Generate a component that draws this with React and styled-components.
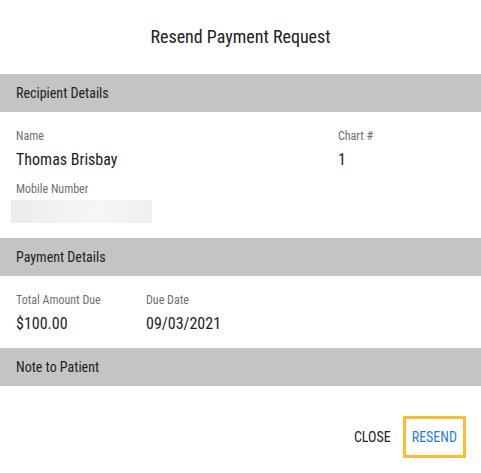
import React from 'react'
import styled, { createGlobalStyle } from 'styled-components';

const GlobalStyle = createGlobalStyle`
    html, body {
        margin: 0;
        padding: 0;
        background: #fff;
    }
    body {
        font-family: Roboto, "Liberation Sans", sans-serif;
        font-stretch: 87.5%;
        color: #212121;
    }
`;

const SDialog = styled.div`
    width: 481px;
    height: 473px;
    background: #fff;
    display: flex;
    flex-direction: column;
    overflow: hidden;
`;

const STitle = styled.h2`
    margin: 0;
    height: 74px;
    display: flex;
    align-items: center;
    justify-content: center;
    font-size: 18px;
    font-weight: 400;
    color: #212121;
    padding-bottom: 1px;
    box-sizing: border-box;
`;

const SSectionBar = styled.div`
    height: 38px;
    background: #c4c4c4;
    display: flex;
    align-items: center;
    padding-left: 16px;
    font-size: 14px;
    color: #222;
`;

const SSectionBody = styled.div`
    display: grid;
    grid-template-columns: ${props => props.columns};
    row-gap: 12px;
    padding: 17px 16px ${props => props.bottom}px;
`;

const SField = styled.div`
    display: flex;
    flex-direction: column;
    grid-column: ${props => props.span ? '1 / -1' : 'auto'};
`;

const SLabel = styled.span`
    font-size: 12px;
    line-height: 14px;
    color: #6f6f6f;
    margin-bottom: 7px;
`;

const SValue = styled.span`
    font-size: 16px;
    line-height: 20px;
    color: #1c1c1c;
`;

const SMasked = styled.div`
    width: 141px;
    height: 23px;
    margin: -3px 0 0 -5px;
    background: linear-gradient(100deg, #ececec 0%, #f6f6f6 60%, #efefef 100%);
`;

const SFooter = styled.div`
    flex: 1;
    display: flex;
    justify-content: flex-end;
    align-items: center;
    gap: 6px;
    padding: 15px 15px 0 0;
`;

const SButton = styled.button`
    font: inherit;
    font-size: 14px;
    font-weight: 400;
    text-transform: uppercase;
    background: #fff;
    cursor: pointer;
    height: 42px;
    padding: 0 6px;
    color: ${props => props.primary ? '#1a7fe3' : '#222'};
    border: ${props => props.primary ? '3px solid #fbbc2d' : 'none'};
    box-sizing: border-box;
    outline: none;
`;

const App = () => (
    <SDialog>
        <GlobalStyle />
        <STitle>Resend Payment Request</STitle>

        <SSectionBar>Recipient Details</SSectionBar>
        <SSectionBody columns="322px 1fr" bottom={15}>
            <SField>
                <SLabel>Name</SLabel>
                <SValue>Thomas Brisbay</SValue>
            </SField>
            <SField>
                <SLabel>Chart #</SLabel>
                <SValue>1</SValue>
            </SField>
            <SField span>
                <SLabel>Mobile Number</SLabel>
                <SMasked />
            </SField>
        </SSectionBody>

        <SSectionBar>Payment Details</SSectionBar>
        <SSectionBody columns="130px 1fr" bottom={14}>
            <SField>
                <SLabel>Total Amount Due</SLabel>
                <SValue>$100.00</SValue>
            </SField>
            <SField>
                <SLabel>Due Date</SLabel>
                <SValue>09/03/2021</SValue>
            </SField>
        </SSectionBody>

        <SSectionBar>Note to Patient</SSectionBar>

        <SFooter>
            <SButton>Close</SButton>
            <SButton primary>Resend</SButton>
        </SFooter>
    </SDialog>
);

export default App;
